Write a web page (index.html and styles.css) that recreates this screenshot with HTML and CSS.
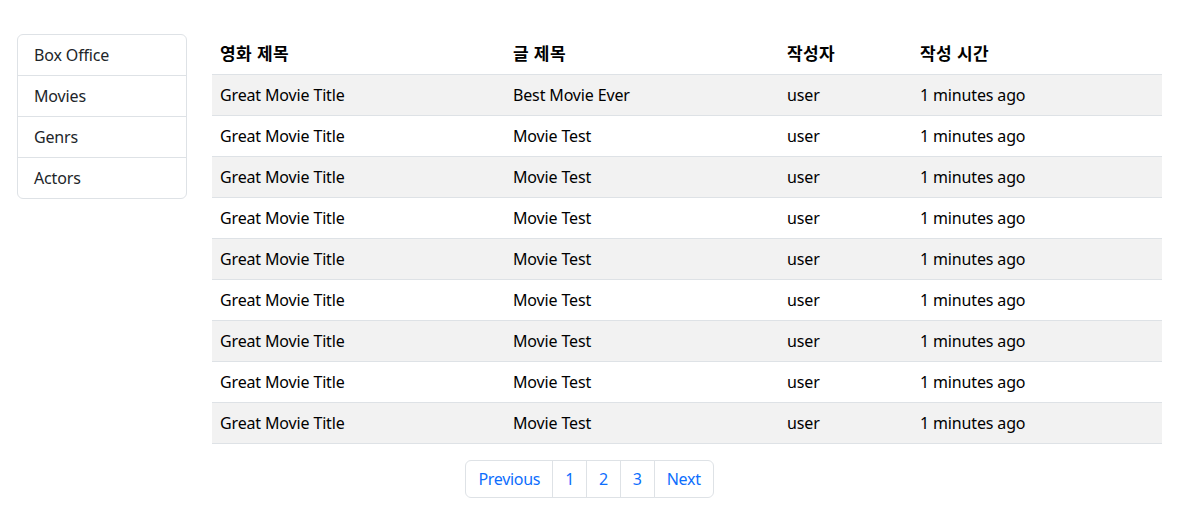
FILE: index.html
```html
<!DOCTYPE html>
<html lang="ko">
<head>
<meta charset="utf-8">
<title>Board</title>
<link rel="stylesheet" href="styles.css">
</head>
<body>
<div class="page">
  <div class="layout">
    <nav class="side">
      <a class="side-item" href="#">Box Office</a>
      <a class="side-item" href="#">Movies</a>
      <a class="side-item" href="#">Genrs</a>
      <a class="side-item" href="#">Actors</a>
    </nav>
    <main class="main">
      <table class="board">
        <colgroup>
          <col class="c1"><col class="c2"><col class="c3"><col class="c4">
        </colgroup>
        <thead>
          <tr><th>영화 제목</th><th>글 제목</th><th>작성자</th><th>작성 시간</th></tr>
        </thead>
        <tbody>
          <tr><td>Great Movie Title</td><td>Best Movie Ever</td><td>user</td><td>1 minutes ago</td></tr>
          <tr><td>Great Movie Title</td><td>Movie Test</td><td>user</td><td>1 minutes ago</td></tr>
          <tr><td>Great Movie Title</td><td>Movie Test</td><td>user</td><td>1 minutes ago</td></tr>
          <tr><td>Great Movie Title</td><td>Movie Test</td><td>user</td><td>1 minutes ago</td></tr>
          <tr><td>Great Movie Title</td><td>Movie Test</td><td>user</td><td>1 minutes ago</td></tr>
          <tr><td>Great Movie Title</td><td>Movie Test</td><td>user</td><td>1 minutes ago</td></tr>
          <tr><td>Great Movie Title</td><td>Movie Test</td><td>user</td><td>1 minutes ago</td></tr>
          <tr><td>Great Movie Title</td><td>Movie Test</td><td>user</td><td>1 minutes ago</td></tr>
          <tr><td>Great Movie Title</td><td>Movie Test</td><td>user</td><td>1 minutes ago</td></tr>
        </tbody>
      </table>
    </main>
  </div>
  <ul class="pager">
    <li><a href="#">Previous</a></li>
    <li><a href="#">1</a></li>
    <li><a href="#">2</a></li>
    <li><a href="#">3</a></li>
    <li><a href="#">Next</a></li>
  </ul>
</div>
</body>
</html>
```
FILE: styles.css
```css
* { box-sizing: border-box; }
html, body { margin: 0; padding: 0; background: #fff; }
body {
  font-family: "Noto Sans", "Noto Sans CJK KR", sans-serif;
  font-size: 16px;
  line-height: 24px;
  letter-spacing: -0.15px;
  color: #212529;
}
.page {
  width: 1145px;
  margin-left: 17px;
  padding-top: 34px;
}
.layout {
  display: flex;
  gap: 25px;
  align-items: flex-start;
}
.side {
  width: 170px;
  flex: none;
  display: flex;
  flex-direction: column;
  border: 1px solid #dee2e6;
  border-radius: 6px;
}
.side-item {
  display: block;
  padding: 8px 16px;
  color: #212529;
  text-decoration: none;
  border-top: 1px solid #dee2e6;
}
.side-item:first-child { border-top: none; }
.main { width: 950px; flex: none; }
.board {
  width: 950px;
  border-collapse: collapse;
  table-layout: fixed;
  color: #000;
}
.c1 { width: 293px; }
.c2 { width: 274px; }
.c3 { width: 133px; }
.c4 { width: 250px; }
.board th, .board td {
  text-align: left;
  padding: 8px 8px;
  white-space: nowrap;
}
.board th {
  font-weight: 700;
  font-size: 17px;
  letter-spacing: 0.4px;
  border-bottom: 1px solid #dee2e6;
}
.board td { border-bottom: 1px solid #dee2e6; }
.board tbody tr:nth-child(odd) td { background: #f2f2f2; }
.pager {
  list-style: none;
  margin: 16px 0 0;
  padding: 0;
  display: flex;
  justify-content: center;
}
.pager li a {
  display: block;
  padding: 6px 12px;
  color: #0d6efd;
  text-decoration: none;
  border: 1px solid #dee2e6;
  margin-left: -1px;
  background: #fff;
  letter-spacing: -0.3px;
}
.pager li:first-child a { border-radius: 6px 0 0 6px; margin-left: 0; }
.pager li:last-child a { border-radius: 0 6px 6px 0; }
```
